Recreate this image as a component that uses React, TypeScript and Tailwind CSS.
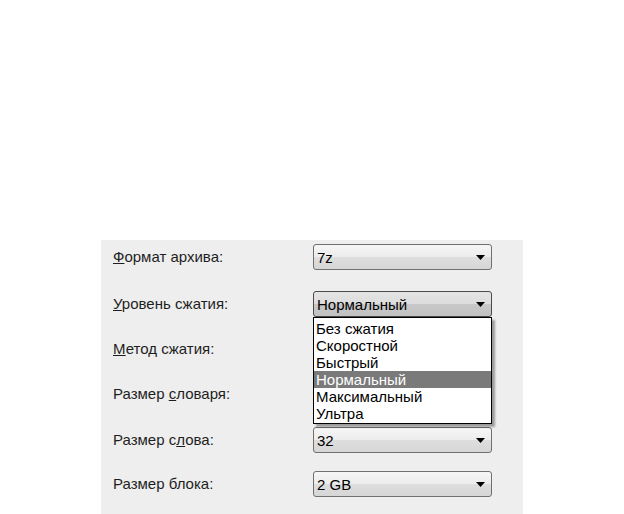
import React from "react";

const Arrow = () => (
  <svg width="9" height="5" viewBox="0 0 9 5" className="block">
    <path d="M0 0 H9 L4.5 5 Z" fill="#000" />
  </svg>
);

function Combo({ value, open = false }: { value: string; open?: boolean }) {
  return (
    <div
      className={
        "flex h-[26px] w-[179px] items-center justify-between rounded-[3px] border pl-[3px] pr-[6px] text-[15px] leading-none text-black " +
        (open
          ? "border-[#4a4a4a] bg-[linear-gradient(#e4e4e4,#dcdcdc_50%,#c8c8c8_51%,#c2c2c2)]"
          : "border-[#707070] bg-[linear-gradient(#f6f6f6,#ececec_50%,#dedede_51%,#d6d6d6)]")
      }
    >
      <span>{value}</span>
      <Arrow />
    </div>
  );
}

const rows: { label: React.ReactNode; value: string; open?: boolean; mt: string }[] = [
  { label: <><u>Ф</u>ормат архива:</>, value: "7z", mt: "mt-[4px]" },
  { label: <><u>У</u>ровень сжатия:</>, value: "Нормальный", open: true, mt: "mt-[21px]" },
  { label: <><u>М</u>етод сжатия:</>, value: "", mt: "mt-[19px]" },
  { label: <>Размер <u>с</u>ловаря:</>, value: "", mt: "mt-[19px]" },
  { label: <>Размер с<u>л</u>ова:</>, value: "32", mt: "mt-[20px]" },
  { label: <>Размер блока:</>, value: "2 GB", mt: "mt-[18px]" },
];

const items = ["Без сжатия", "Скоростной", "Быстрый", "Нормальный", "Максимальный", "Ультра"];

export default function App() {
  return (
    <div
      className="h-[514px] w-[624px] overflow-hidden bg-white pl-[101px] pt-[240px]"
      style={{ fontFamily: '"Liberation Sans", Arial, sans-serif' }}
    >
      <div className="relative h-[274px] w-[422px] bg-[#eeeeee] pl-[12px]">
        <div className="flex flex-col">
          {rows.map((r, i) => (
            <div key={i} className={"flex items-center " + r.mt}>
              <div className="w-[200px] pb-[2px] text-[15px] leading-none text-[#1e1e1e]">{r.label}</div>
              <Combo value={r.value} open={r.open} />
            </div>
          ))}
        </div>
        <div className="absolute left-[212px] top-[77px] w-[179px] border border-black bg-white pt-[2px] pb-[1px] text-[15px] leading-[17px] text-black shadow-[3px_3px_2px_rgba(0,0,0,0.35)]">
          {items.map((t) => (
            <div
              key={t}
              className={"px-[2px] " + (t === "Нормальный" ? "bg-[#7a7a7a] text-white" : "")}
            >
              {t}
            </div>
          ))}
        </div>
      </div>
    </div>
  );
}
